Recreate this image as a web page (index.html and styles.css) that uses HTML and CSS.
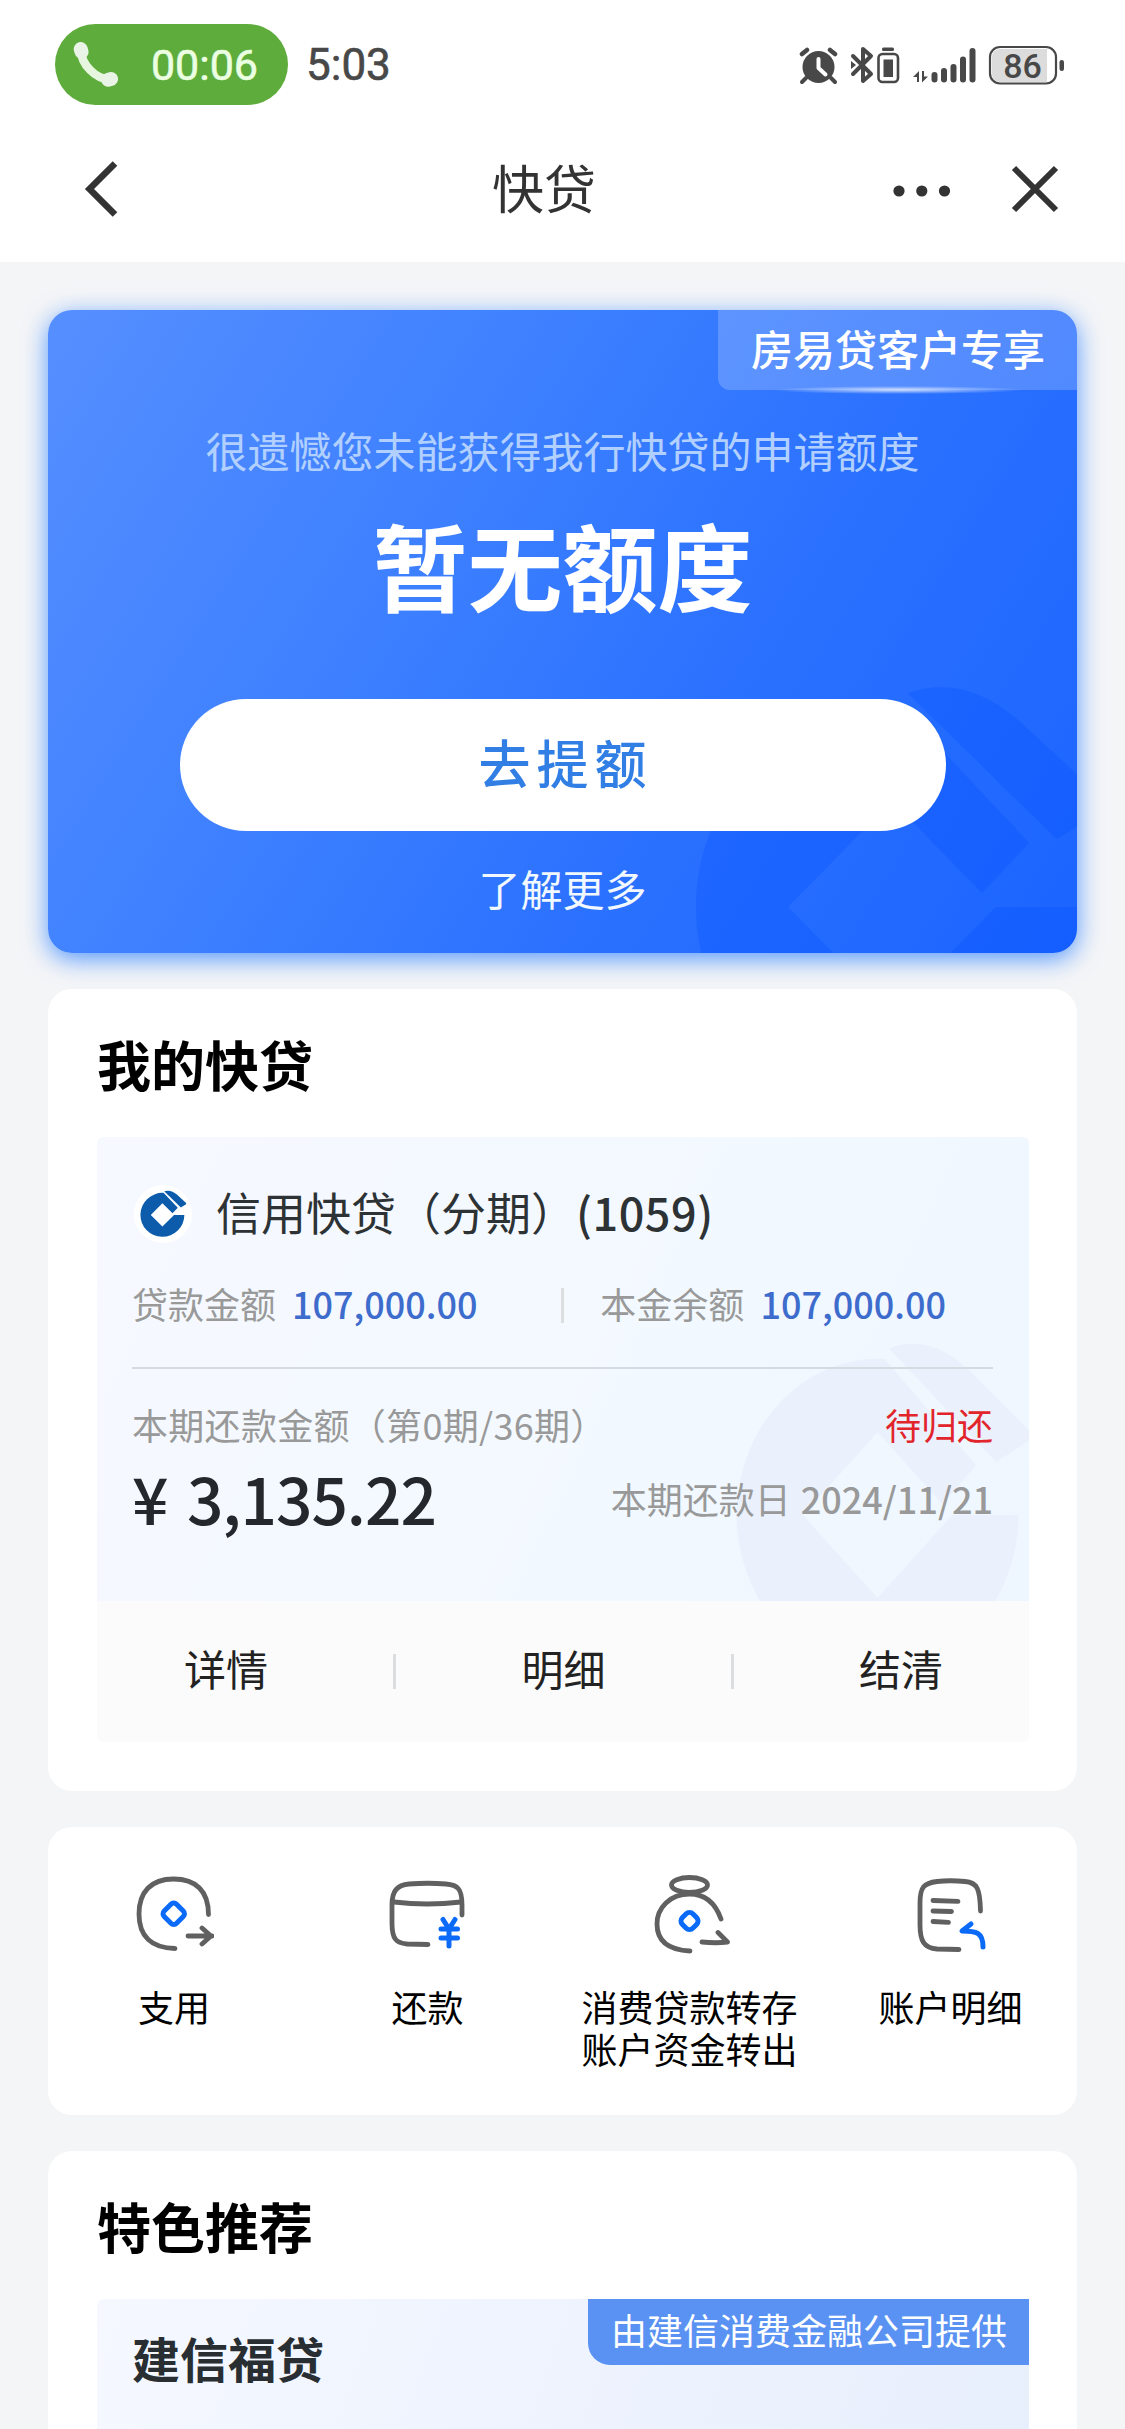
FILE: index.html
```html
<!DOCTYPE html>
<html lang="zh-CN">
<head>
<meta charset="utf-8">
<title>快贷</title>
<link rel="stylesheet" href="styles.css">
</head>
<body>
<svg class="defs" width="0" height="0" aria-hidden="true">
  <defs>
    <g id="bank-mark">
      <path d="M5-100 70-32 46-7 0-53-53 0 0 53 53 0H100A100 100 0 1 1 5-100Z"/>
      <path d="M8-107Q38-117 66-92L108-54 108-48 84-34Z"/>
    </g>
  </defs>
</svg>
<div class="page">
  <header class="top">
    <div class="status">
      <div class="call">
        <svg width="46" height="46" viewBox="0 0 46 46"><path d="M8 8C8 22 22 37 38 38" fill="none" stroke="#e6f6df" stroke-width="8.500"/><rect x="1" y="0" width="14" height="17" rx="7" transform="rotate(-16 8 8)" fill="#e9f3e6"/><rect x="28" y="30.500" width="17" height="14" rx="7" transform="rotate(-14 36 37)" fill="#e9f3e6"/></svg>
        <span>00:06</span>
      </div>
      <span class="clock">5:03</span>
      <svg class="indicators" width="266" height="40" viewBox="799 44 266 40">
        <g fill="#484848">
          <circle cx="818.500" cy="66" r="16"/>
          <path d="M806 77l-4 4M831 77l4 4" stroke="#484848" stroke-width="4" stroke-linecap="round"/>
          <path d="M802 53l5-4M830 49l5 4" stroke="#484848" stroke-width="4.500" stroke-linecap="round"/>
          <path d="M818.500 58v9l7 6.500" fill="none" stroke="#fff" stroke-width="4" stroke-linecap="round" stroke-linejoin="round"/>
          <path d="M853 55l18 18-8 7V48l8 7-18 18" fill="none" stroke="#484848" stroke-width="4" stroke-linecap="round" stroke-linejoin="round"/>
          <path d="M851 60l5 4-5 4z"/>
          <rect x="882" y="46.500" width="12" height="3.500" rx="1.500"/>
          <rect x="878.500" y="53" width="19.500" height="28" rx="4" fill="none" stroke="#484848" stroke-width="2.600"/>
          <rect x="883.500" y="58.500" width="9.500" height="17.500"/>
          <path d="M919 81V70l-6 6h4v5zM922 70v11.500l6-6h-4V70z"/>
          <rect x="931.500" y="71" width="6" height="10.500" rx="3"/>
          <rect x="941" y="67" width="6" height="14.500" rx="3"/>
          <rect x="950.500" y="63" width="6" height="18.500" rx="3"/>
          <rect x="960" y="55.500" width="6" height="26" rx="3"/>
          <rect x="969.500" y="47" width="6" height="34.500" rx="3"/>
          <path d="M1000 48h47v33h-47a8 8 0 0 1-8-8V56a8 8 0 0 1 8-8z" fill="#dcdcdc"/>
          <rect x="990" y="46" width="66" height="36.500" rx="10" fill="none" stroke="#484848" stroke-width="2.200"/>
          <rect x="1059.500" y="59" width="4.500" height="11" rx="2.200"/>
          <text x="1022.500" y="76.500" text-anchor="middle" class="level">86</text>
        </g>
      </svg>
    </div>
    <nav class="nav">
      <svg width="34" height="56" viewBox="0 0 34 56"><path d="M31 2.500 5.500 28 31 53.500" fill="none" stroke="#333" stroke-width="6.500"/></svg>
      <h1>快贷</h1>
      <div class="nav-actions">
        <svg width="58" height="12" viewBox="0 0 58 12" fill="#333"><circle cx="6" cy="6" r="5.600"/><circle cx="28.800" cy="6" r="5.600"/><circle cx="51.500" cy="6" r="5.600"/></svg>
        <svg width="48" height="48" viewBox="0 0 48 48"><path d="M3 3 45 45M45 3 3 45" stroke="#333" stroke-width="6"/></svg>
      </div>
    </nav>
  </header>

  <main class="content">
    <section class="hero">
      <svg class="hero-mark" viewBox="-102 -116 196.400 139" preserveAspectRatio="none"><use href="#bank-mark"/></svg>
      <div class="hero-tag">房易贷客户专享</div>
      <p class="hero-note">很遗憾您未能获得我行快贷的申请额度</p>
      <p class="hero-title">暂无额度</p>
      <a class="hero-button">去提额</a>
      <a class="hero-more">了解更多</a>
    </section>

    <section class="card loans">
      <h2>我的快贷</h2>
      <div class="loan">
        <div class="loan-body">
          <svg class="loan-mark" viewBox="-100.400 -113.500 207.800 168.600" preserveAspectRatio="none"><use href="#bank-mark"/></svg>
          <div class="loan-name">
            <span class="logo"><svg width="47" height="48" viewBox="-102 -113 214 218" preserveAspectRatio="none"><use href="#bank-mark"/></svg></span>
            <span>信用快贷（分期）<b>(1059)</b></span>
          </div>
          <div class="amounts">
            <div><span>贷款金额</span><b>107,000.00</b></div>
            <i></i>
            <div><span>本金余额</span><b>107,000.00</b></div>
          </div>
          <div class="due"><span>本期还款金额（第0期/36期）</span><span class="pending">待归还</span></div>
          <div class="payment"><strong>¥ 3,135.22</strong><span>本期还款日 <b>2024/11/21</b></span></div>
        </div>
        <div class="loan-actions"><a>详情</a><i></i><a>明细</a><i></i><a>结清</a></div>
      </div>
    </section>

    <section class="card shortcuts">
      <a>
        <svg viewBox="0 0 80 80"><g class="ink"><path d="M74.500 40.500C74.500 17 62 5 39.500 5S5 18 5 40s12 34 36 34.500"/><path d="M54 62h24M68 54l9 8-9 8"/></g><rect class="accent" x="31" y="31" width="17.500" height="17.500" rx="4" transform="rotate(45 39.750 39.750)"/></svg>
        <span>支用</span>
      </a>
      <a>
        <svg viewBox="0 0 80 80"><g class="ink"><path d="M74 41V31C74 15 70 11 58 10Q40 8.500 21 10C9 11 4 17 4 31v18c0 16 4 20 15 21l21 .5"/><path d="M6 28q33 4 67 0"/></g><path class="accent" d="M55 45.500l6 9.500 6-9.500M61 55v17M53 55h16.500M53 64h16.500"/></svg>
        <span>还款</span>
      </a>
      <a>
        <svg viewBox="0 0 80 80"><g class="ink"><ellipse cx="39.500" cy="11" rx="18" ry="7.500"/><path d="M71 45C65 28 54 20 39.500 20 20 20 7 34 7 50c0 18 13 26 33 27"/><path d="M52 68q14 1.500 25.500 0L68 58.500"/></g><rect class="accent" x="32" y="39.500" width="15" height="15" rx="5" transform="rotate(45 39.500 47)"/></svg>
        <span>消费贷款转存<br>账户资金转出</span>
      </a>
      <a>
        <svg viewBox="0 0 80 80"><g class="ink"><path d="M69.500 37C69 14 66 8.500 54 7.500Q39 6 26 7.500C13 9 9 13 9 29v22c0 16 4 23 17 24l22 .5"/><path d="M22 26.500l25 .8M22 37l18.500.5M22 47.500l15.500.8"/></g><path class="accent" d="M60 50l-9 7c14 0 21 1 21 16"/></svg>
        <span>账户明细</span>
      </a>
    </section>

    <section class="card picks">
      <h2>特色推荐</h2>
      <div class="pick">
        <h3>建信福贷</h3>
        <span class="provider">由建信消费金融公司提供</span>
      </div>
    </section>
  </main>
</div>
</body>
</html>
```
FILE: styles.css
```css
* { box-sizing: border-box; margin: 0; padding: 0; }
body { background: #f4f5f7; font-family: "Noto Sans CJK SC", sans-serif; color: #000; }
b, strong { font-weight: 500; }
i { display: block; width: 3px; height: 35px; background: #dcdddf; }
svg { display: block; flex: none; }
.defs { position: absolute; }
.page { width: 1125px; height: 2429px; overflow: hidden; }

.top { height: 262px; background: #fff; }
.status { height: 129px; padding: 0 60px 0 55px; display: flex; align-items: center; font-family: Roboto, sans-serif; font-size: 44px; }
.call { width: 233px; height: 81px; border-radius: 41px; background: #5eac3b; color: #ebffe2; display: flex; align-items: center; justify-content: space-between; padding: 0 30px 0 18px; }
.call span { font-size: 43px; -webkit-text-stroke: .6px; }
.clock { margin-left: 18px; color: #484848; -webkit-text-stroke: .6px; }
.indicators { margin-left: auto; }
.level { font: 500 34px Roboto, sans-serif; }
.nav { height: 120px; padding: 0 66px 0 84px; display: grid; grid-template-columns: 175px 1fr 175px; align-items: center; }
.nav h1 { font-size: 52px; font-weight: 400; line-height: 60px; color: #333; text-align: center; padding-right: 55px; margin-top: -4px; }
.nav-actions { display: flex; align-items: center; justify-content: flex-end; gap: 60px; }
.nav-actions svg:first-child { margin-top: 3px; }

.content { padding: 48px 48px 0; display: flex; flex-direction: column; gap: 36px; }
.hero { position: relative; height: 643px; border-radius: 24px; color: #fff; display: flex; flex-direction: column; align-items: center; background: linear-gradient(122deg, #568fff 0%, #3c7fff 38%, #2c72ff 62%, #1b64ff 100%); box-shadow: 0 6px 24px rgba(32, 122, 255, .75); }
.hero > * { position: relative; }
.hero .hero-mark { position: absolute; right: 0; bottom: 0; width: 385px; height: 278px; fill: rgba(0, 76, 255, .25); border-radius: 0 0 24px 0; overflow: hidden; }
.hero-tag { align-self: flex-end; width: 359px; height: 80px; padding-left: 33px; line-height: 76px; font-size: 42px; font-weight: 500; border-radius: 0 24px 0 12px; background: rgba(255, 255, 255, .2); }
.hero-tag::after { content: ""; position: absolute; left: 55px; bottom: -4px; width: 250px; height: 8px; background: radial-gradient(closest-side, rgba(255, 255, 255, .75), rgba(255, 255, 255, 0)); }
.hero-note { margin-top: 30px; font-size: 42px; line-height: 60px; color: #b2d0ff; }
.hero-title { margin-top: 24px; font-size: 95px; line-height: 120px; font-weight: 700; }
.hero-button { margin-top: 75px; width: 766px; height: 132px; border-radius: 66px; background: #fff; color: #317fe5; font-size: 52px; font-weight: 500; line-height: 126px; letter-spacing: 6px; text-indent: 6px; text-align: center; }
.hero-more { margin-top: 27px; font-size: 42px; line-height: 60px; color: #f1f8ff; }

.card { background: #fff; border-radius: 24px; }
.card h2 { font-size: 54px; line-height: 64px; font-weight: 700; }
.loans { height: 802px; padding: 43px 48px 0 49px; }
.loan { margin-top: 41px; border-radius: 6px; overflow: hidden; }
.loan-body { position: relative; height: 464px; padding: 0 36px 0 35px; background: linear-gradient(115deg, #f6f9ff, #f3f9ff 50%, #eef6ff); }
.loan-body > * { position: relative; }
.loan-body .loan-mark { position: absolute; right: 0; bottom: 0; width: 293px; height: 263px; fill: #eaf1fd; overflow: hidden; }
.loan-name { display: flex; align-items: center; gap: 24px; padding-top: 44px; font-size: 45px; line-height: 60px; color: #2d3235; }
.loan-name b { letter-spacing: .5px; }
.logo { width: 58px; height: 58px; margin: 4px 0 0 2px; padding-left: 1px; border-radius: 50%; background: #fff; display: flex; align-items: center; justify-content: center; fill: #0d5cab; }
.amounts { height: 126px; display: flex; align-items: flex-start; justify-content: space-between; padding: 30px 47px 0 0; border-bottom: 2px solid #d5dbe0; font-size: 36px; line-height: 60px; color: #999; }
.loan-name { height: 106px; }
.amounts div { display: flex; gap: 16px; }
.amounts b { color: #3e6ccd; }
.amounts i { margin: 15px 0 0 47px; }
.due { display: flex; justify-content: space-between; margin-top: 25px; font-size: 36px; line-height: 60px; color: #999; }
.due span:first-child { letter-spacing: .3px; }
.pending { color: #e2242b; }
.payment { display: flex; justify-content: space-between; align-items: center; line-height: 80px; color: #999; font-size: 36px; margin-top: 1px; }
.payment > span { padding-top: 3px; word-spacing: 2px; }
.payment strong { font-size: 64px; color: #24282d; letter-spacing: -1px; word-spacing: 6px; }
.loan-actions { height: 141px; padding: 0 86px 0 87px; display: flex; align-items: center; justify-content: space-between; background: #fafbfa; font-size: 42px; color: #222; }
.loan-actions a { margin-top: -8px; }

.shortcuts { height: 288px; padding-top: 47px; display: grid; grid-template-columns: 252px 255px 269px 253px; font-size: 36px; line-height: 42px; text-align: center; }
.shortcuts a { display: flex; flex-direction: column; align-items: center; gap: 31px; }
.shortcuts svg { width: 80px; height: 80px; fill: none; stroke-width: 4.800px; stroke-linecap: round; stroke-linejoin: round; }
.ink { stroke: #606060; }
.accent { stroke: #0b6bf8; stroke-width: 5px; }

.picks { padding: 43px 48px 0 49px; height: 500px; }
.pick { margin-top: 41px; height: 240px; padding-left: 35px; border-radius: 6px 0 0 0; display: flex; justify-content: space-between; align-items: flex-start; background: linear-gradient(110deg, #f5f8ff, #eef3fe 50%, #e7effc); }
.pick h3 { margin-top: 28px; font-size: 48px; line-height: 60px; font-weight: 700; color: #292e33; }
.provider { width: 441px; height: 66px; padding-left: 23px; border-radius: 0 0 0 22px; background: #5a92f3; color: #fff; font-size: 36px; line-height: 60px; }
```
